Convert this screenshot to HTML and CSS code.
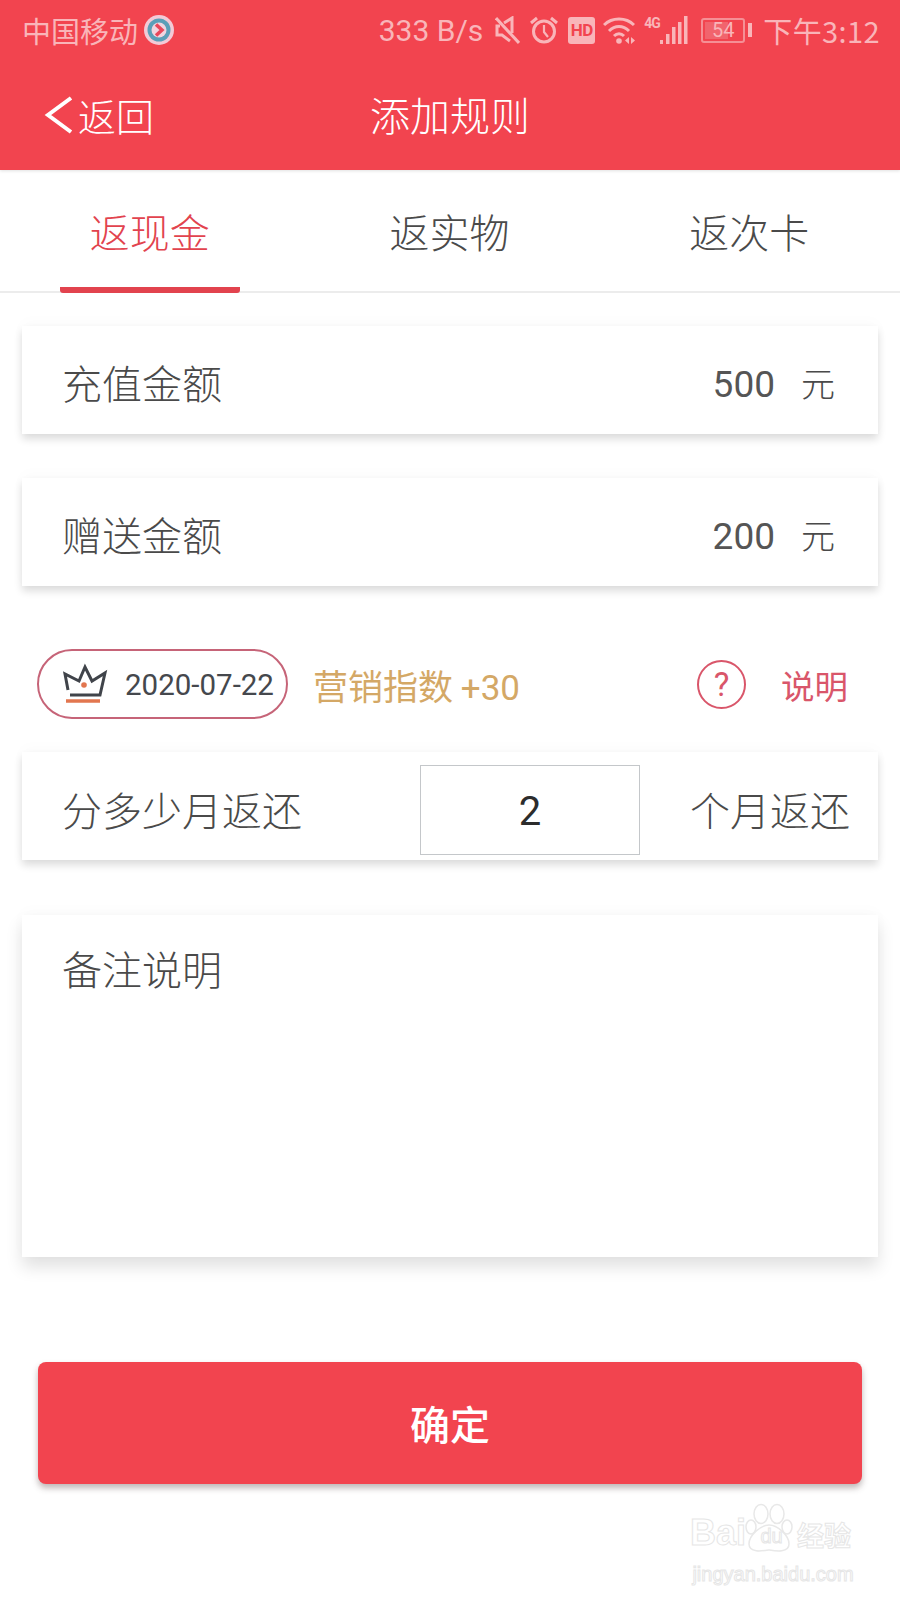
FILE: index.html
```html
<!DOCTYPE html>
<html lang="zh-CN">

<head>
    <meta charset="utf-8" />
    <title>添加规则</title>
    <link rel="stylesheet" href="styles.css">
</head>

<body>
    <div class="Page">
        <div class="Header">
            <div class="StatusBar">
                <div class="StatusLeft">
                    <span>中国移动</span>
                    <svg class="CarrierIcon" width="32" height="32" viewBox="0 0 32 32">
                        <circle cx="16" cy="16" r="15" fill="#f3c9d6" />
                        <circle cx="16" cy="16" r="11.500" fill="#5a9fb8" />
                        <circle cx="16" cy="16" r="7.500" fill="#f0d5df" />
                        <path d="M13 10.500 19 16 13 21.500" fill="none" stroke="#e8475a" stroke-width="3.500" />
                    </svg>
                </div>
                <div class="StatusRight">
                    <span class="Speed">333 B/s</span>
                    <svg width="25" height="28" viewBox="0 0 25 28" fill="none" stroke="#f9b5b9" stroke-width="3">
                        <path d="M1 2 24 27" />
                        <path d="M5 10H2V19H7L15 25" />
                        <path d="M9 7 17 2V17" />
                    </svg>
                    <svg width="28" height="28" viewBox="0 0 28 28" fill="none" stroke="#f9b5b9" stroke-width="3">
                        <circle cx="14" cy="15.500" r="10.500" />
                        <path d="M14 9V16L18 21" stroke-width="2.200" />
                        <path d="M1 7 7 2M27 7 21 2" />
                    </svg>
                    <span class="HdIcon">HD</span>
                    <svg class="WifiIcon" width="32" height="28" viewBox="0 0 32 28" fill="none" stroke="#f9b5b9" stroke-width="3">
                        <path d="M1 9C9 1 23 1 31 9" />
                        <path d="M6 15C12 9 20 9 26 15" />
                        <path d="M11 20C14 17 18 17 21 20" />
                        <circle cx="16" cy="25" r="2.800" fill="#f9b5b9" stroke="none" />
                        <path d="M26 21 22 24.500 26 28ZM28 21 32 24.500 28 28Z" fill="#f9b5b9" stroke="none" />
                    </svg>
                    <div class="Signal">
                        <span class="SignalLabel">4G</span>
                        <svg width="28" height="28" viewBox="0 0 28 28" fill="#f9b5b9">
                            <rect x="0" y="24" width="3" height="4" />
                            <rect x="6" y="18" width="3.500" height="10" />
                            <rect x="12" y="11" width="3.500" height="17" />
                            <rect x="18" y="6" width="3.500" height="22" />
                            <rect x="24" y="0" width="3.500" height="28" />
                        </svg>
                    </div>
                    <div class="Battery">
                        <div class="BatteryBody"><span class="BatteryFill"></span><span class="BatteryText">54</span></div>
                        <span class="BatteryTip"></span>
                    </div>
                    <span class="Clock">下午3:12</span>
                </div>
            </div>
            <div class="NavBar">
                <div class="Back">
                    <svg width="30" height="40" viewBox="0 0 30 40" fill="none" stroke="#fff" stroke-width="4">
                        <path d="M27 3 4 20 27 37" />
                    </svg>
                    <span>返回</span>
                </div>
                <div class="NavTitle">添加规则</div>
            </div>
        </div>

        <div class="Tabs">
            <div class="Tab TabActive">返现金</div>
            <div class="Tab">返实物</div>
            <div class="Tab">返次卡</div>
        </div>

        <div class="Content">
            <div class="Card AmountCard">
                <span class="Label">充值金额</span>
                <span class="Value">500</span>
                <span class="Unit">元</span>
            </div>
            <div class="Card AmountCard SecondCard">
                <span class="Label">赠送金额</span>
                <span class="Value">200</span>
                <span class="Unit">元</span>
            </div>

            <div class="InfoRow">
                <div class="DateBadge">
                    <svg width="46" height="44" viewBox="0 0 46 44" fill="none" stroke="#40444a" stroke-width="3">
                        <path d="M6 28 3 12 17 19 23 5 30 19 43 11 38 33H8" />
                        <circle cx="22" cy="23" r="2.800" fill="#e2764f" stroke="none" />
                        <path d="M4 39H38" stroke="#e2764f" stroke-width="3.500" />
                    </svg>
                    <span class="DateText">2020-07-22</span>
                </div>
                <div class="Score">营销指数 <span class="ScoreNum">+30</span></div>
                <div class="Help">
                    <span class="HelpIcon">?</span>
                    <span class="HelpText">说明</span>
                </div>
            </div>

            <div class="Card MonthCard">
                <span class="Label MonthLabel">分多少月返还</span>
                <div class="MonthInput">2</div>
                <span class="Label MonthSuffix">个月返还</span>
            </div>

            <div class="Card NoteCard">
                <span class="Label">备注说明</span>
            </div>

            <div class="ConfirmBtn">确定</div>
        </div>

        <div class="Watermark">
            <svg class="Paw" width="48" height="50" viewBox="0 0 48 50" fill="#fff" stroke="#e8e8e8" stroke-width="1.500">
                <ellipse cx="16" cy="11" rx="7" ry="9.500" />
                <ellipse cx="32" cy="11" rx="7" ry="9.500" />
                <ellipse cx="6" cy="24" rx="5" ry="7" />
                <ellipse cx="42" cy="24" rx="5" ry="7" />
                <path d="M24 22C16 22 4 32 4 41 4 50 17 48 24 47 31 48 44 50 44 41 44 32 32 22 24 22Z" />
            </svg>
            <div class="WmLogo"><span>Bai</span><span class="WmDu">du</span><span class="WmCn">经验</span></div>
            <div class="WmUrl">jingyan.baidu.com</div>
        </div>
    </div>
</body>

</html>
```

FILE: styles.css
```css
html,
body {
    margin: 0;
    padding: 0;
    background: #ffffff;
}

.Page {
    position: relative;
    width: 900px;
    height: 1600px;
    overflow: hidden;
    font-family: "Noto Sans CJK SC", "Roboto", "Liberation Sans", sans-serif;
    color: #4a4a4a;
}

.Header {
    height: 170px;
    background: #f2444f;
    color: #ffffff;
    box-shadow: 0 1px 3px rgba(0, 0, 0, 0.12);
}

.StatusBar {
    display: flex;
    justify-content: space-between;
    align-items: center;
    height: 60px;
    padding: 0 20px 0 22px;
    color: #f9b5b9;
    font-size: 29px;
}

.StatusLeft {
    display: flex;
    align-items: center;
    gap: 5px;
}

.StatusRight {
    display: flex;
    align-items: center;
    gap: 10px;
}

.Speed {
    font-family: "Roboto", sans-serif;
    font-size: 30px;
    margin-right: 2px;
}

.HdIcon {
    width: 27px;
    height: 27px;
    line-height: 27px;
    text-align: center;
    border-radius: 3px;
    background: #f9b5b9;
    color: #f2444f;
    font-family: "Roboto", sans-serif;
    font-size: 17px;
    font-weight: 700;
    letter-spacing: -0.5px;
}

.WifiIcon {
    margin-left: -2px;
}

.Signal {
    display: flex;
    align-items: flex-start;
    gap: 2px;
    margin-left: -1px;
}

.SignalLabel {
    width: 14px;
    font-family: "Roboto", sans-serif;
    font-size: 14px;
    font-weight: 700;
    letter-spacing: -1px;
    line-height: 14px;
}

.Battery {
    display: flex;
    align-items: center;
    gap: 3px;
    margin-left: 3px;
}

.BatteryBody {
    position: relative;
    width: 44px;
    height: 25px;
    box-sizing: border-box;
    border: 2px solid #f58f95;
    border-radius: 3px;
}

.BatteryFill {
    position: absolute;
    left: 2px;
    top: 2px;
    bottom: 2px;
    width: 23px;
    background: #f1646d;
}

.BatteryText {
    position: absolute;
    left: 0;
    right: 0;
    text-align: center;
    font-family: "Roboto", sans-serif;
    font-size: 20px;
    line-height: 21px;
    color: #f9b5b9;
}

.BatteryTip {
    width: 4px;
    height: 14px;
    background: #f9b5b9;
}

.Clock {
    margin-left: 1px;
    font-size: 29px;
    letter-spacing: 0.4px;
}

.NavBar {
    position: relative;
    display: flex;
    align-items: center;
    justify-content: center;
    height: 110px;
    padding-bottom: 2px;
    box-sizing: border-box;
}

.Back {
    position: absolute;
    left: 44px;
    top: 27px;
    display: flex;
    align-items: center;
    gap: 4px;
    font-size: 38px;
    font-weight: 300;
}

.NavTitle {
    font-size: 40px;
    font-weight: 300;
}

.Tabs {
    display: flex;
    height: 123px;
    padding: 0 1px 0 0;
    box-sizing: border-box;
    border-bottom: 2px solid #ececec;
}

.Tab {
    flex: 1;
    margin: 0 60px;
    text-align: center;
    font-size: 40px;
    font-weight: 300;
    line-height: 123px;
    color: #4a4a4a;
}

.TabActive {
    color: #e2434e;
    border-bottom: 6px solid #e2434e;
    height: 117px;
    border-radius: 0 0 3px 3px;
}

.Content {
    display: flex;
    flex-direction: column;
    padding: 33px 22px 0 22px;
}

.Card {
    display: flex;
    align-items: center;
    background: #ffffff;
    box-shadow: 0 5px 8px rgba(0, 0, 0, 0.14), 0 -4px 14px rgba(0, 0, 0, 0.02);
}

.AmountCard {
    height: 108px;
    padding: 0 43px 0 40px;
}

.SecondCard {
    margin-top: 44px;
}

.Label {
    padding-top: 4px;
    font-size: 40px;
    font-weight: 300;
    color: #4a4a4a;
}

.Value {
    margin-left: auto;
    padding-top: 8px;
    font-family: "Roboto", sans-serif;
    font-size: 37px;
    color: #555555;
}

.Unit {
    margin-left: 26px;
    padding-top: 4px;
    font-size: 34px;
    font-weight: 300;
}

.InfoRow {
    display: flex;
    align-items: center;
    height: 70px;
    margin: 63px 0 33px 15px;
}

.DateBadge {
    display: flex;
    align-items: center;
    gap: 17px;
    width: 251px;
    height: 70px;
    box-sizing: border-box;
    padding-left: 23px;
    border: 2px solid #c66478;
    border-radius: 35px;
    font-family: "Roboto", sans-serif;
    font-size: 29.500px;
    color: #45484d;
}

.DateText {
    padding-top: 2px;
}

.Score {
    margin-left: 25px;
    font-size: 35px;
    color: #d4a866;
    white-space: nowrap;
}

.ScoreNum {
    font-family: "Roboto", sans-serif;
}

.Help {
    display: flex;
    align-items: center;
    gap: 35px;
    margin-left: auto;
    margin-right: 30px;
}

.HelpIcon {
    width: 45px;
    height: 45px;
    line-height: 45px;
    text-align: center;
    border: 2px solid #d9566a;
    border-radius: 50%;
    font-family: "Roboto", sans-serif;
    font-size: 33px;
    color: #d9566a;
}

.HelpText {
    font-size: 33.500px;
    color: #d9566a;
}

.MonthCard {
    height: 108px;
    padding-left: 40px;
}

.MonthCard .Label {
    padding-top: 6px;
}

.MonthLabel {
    width: 358px;
}

.MonthInput {
    width: 218px;
    height: 88px;
    margin-top: 8px;
    line-height: 92px;
    text-align: center;
    border: 1px solid #c4c7ca;
    font-family: "Roboto", sans-serif;
    font-size: 40px;
    color: #2c2c2c;
}

.MonthSuffix {
    margin-left: 50px;
    white-space: nowrap;
}

.NoteCard {
    align-items: flex-start;
    height: 342px;
    margin-top: 55px;
    padding: 20px 40px;
    box-sizing: border-box;
    box-shadow: 0 10px 16px rgba(0, 0, 0, 0.12), 0 -4px 14px rgba(0, 0, 0, 0.02);
}

.ConfirmBtn {
    height: 122px;
    margin: 105px 16px 0 16px;
    line-height: 122px;
    text-align: center;
    border-radius: 8px;
    background: #f2444f;
    box-shadow: 0 4px 6px rgba(70, 50, 50, 0.35);
    color: #ffffff;
    font-size: 40px;
    font-weight: 500;
}

/* watermark sits over the page corner */
.Watermark {
    position: absolute;
    left: 690px;
    top: 1503px;
    width: 170px;
    color: #ffffff;
    -webkit-text-stroke: 1px #e6e6e6;
    font-family: "Liberation Sans", sans-serif;
    text-align: center;
}

.Paw {
    position: absolute;
    left: 55px;
    top: 0;
}

.WmLogo {
    position: relative;
    display: flex;
    align-items: flex-end;
    height: 50px;
    font-size: 36px;
    line-height: 40px;
    font-weight: 700;
}

.WmDu {
    width: 51px;
    font-size: 20px;
    font-weight: 400;
    line-height: 34px;
}

.WmCn {
    font-family: "Noto Sans CJK SC", sans-serif;
    font-size: 27px;
    line-height: 36px;
    white-space: nowrap;
}

.WmUrl {
    margin-top: 10px;
    margin-left: -4px;
    font-size: 20px;
    line-height: 22px;
    white-space: nowrap;
}
```
